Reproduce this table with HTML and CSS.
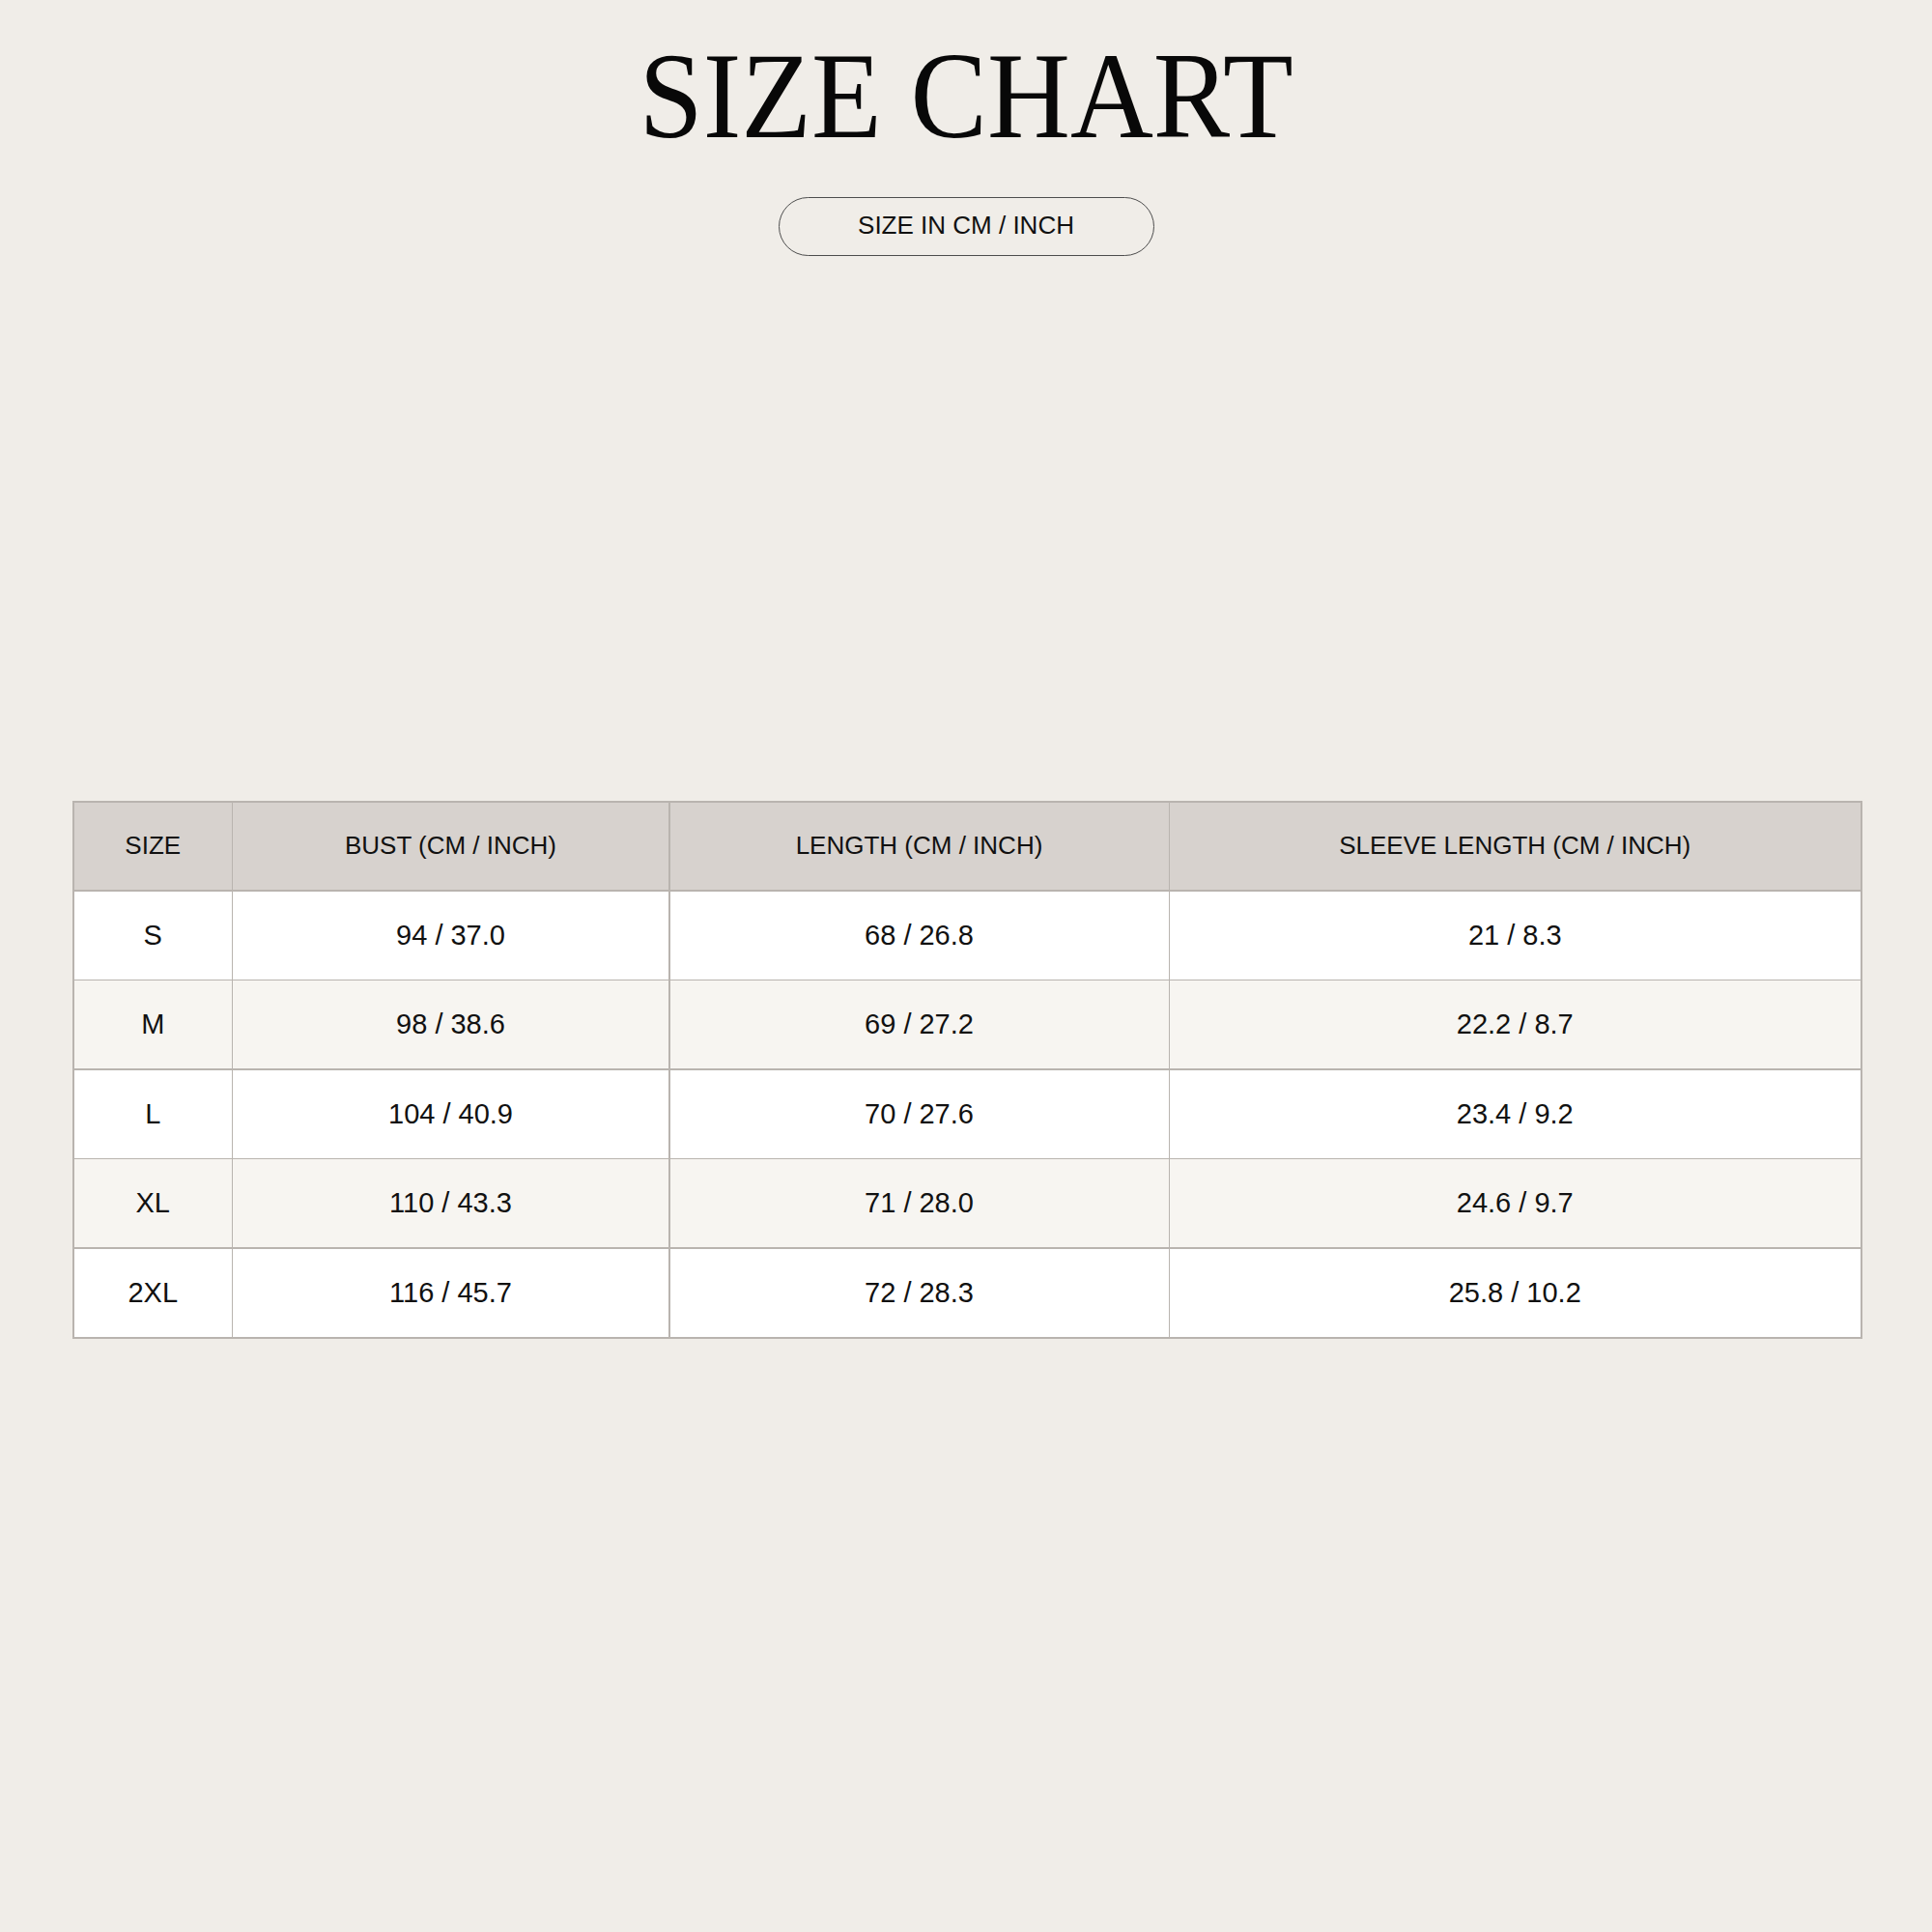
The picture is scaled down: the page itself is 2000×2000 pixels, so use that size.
FILE: index.html
```html
<!DOCTYPE html>
<html lang="en">
<head>
<meta charset="utf-8">
<title>Size Chart</title>
<link rel="stylesheet" href="styles.css">
</head>
<body>
<main class="page">
  <header class="head">
    <h1 class="title"><span class="title-text">SIZE CHART</span></h1>
    <div class="pill">SIZE IN CM / INCH</div>
  </header>

  <section class="chart">
    <div class="cell hd">SIZE</div>
    <div class="cell hd">BUST (CM / INCH)</div>
    <div class="cell hd">LENGTH (CM / INCH)</div>
    <div class="cell hd">SLEEVE LENGTH (CM / INCH)</div>

    <div class="cell">S</div>
    <div class="cell">94 / 37.0</div>
    <div class="cell">68 / 26.8</div>
    <div class="cell">21 / 8.3</div>

    <div class="cell alt">M</div>
    <div class="cell alt">98 / 38.6</div>
    <div class="cell alt">69 / 27.2</div>
    <div class="cell alt">22.2 / 8.7</div>

    <div class="cell">L</div>
    <div class="cell">104 / 40.9</div>
    <div class="cell">70 / 27.6</div>
    <div class="cell">23.4 / 9.2</div>

    <div class="cell alt">XL</div>
    <div class="cell alt">110 / 43.3</div>
    <div class="cell alt">71 / 28.0</div>
    <div class="cell alt">24.6 / 9.7</div>

    <div class="cell">2XL</div>
    <div class="cell">116 / 45.7</div>
    <div class="cell">72 / 28.3</div>
    <div class="cell">25.8 / 10.2</div>
  </section>
</main>
</body>
</html>
```

FILE: styles.css
```css
html, body {
  margin: 0;
  padding: 0;
}

body {
  background: #f0ede8;
  color: #111111;
  font-family: "Liberation Sans", Arial, sans-serif;
  width: 2000px;
  min-height: 2000px;
}

.page {
  display: flex;
  flex-direction: column;
}

.head {
  display: flex;
  flex-direction: column;
  align-items: center;
}

.title {
  margin: 35px 0 0;
  font-family: "Liberation Serif", "Times New Roman", serif;
  font-weight: 400;
  font-size: 128px;
  line-height: 128px;
  color: #080808;
  white-space: nowrap;
}

.title-text {
  display: inline-block;
  transform: scaleX(0.93);
  transform-origin: center;
}

.pill {
  margin-top: 41px;
  box-sizing: border-box;
  width: 389px;
  height: 61px;
  border: 1px solid #4d4d4d;
  border-radius: 31px;
  display: flex;
  align-items: center;
  justify-content: center;
  padding-bottom: 2px;
  font-size: 26px;
  color: #111111;
}

.chart {
  margin: 564px 0 0 75px;
  width: 1853px;
  box-sizing: border-box;
  display: grid;
  grid-template-columns: 162.5px 451px 516px 714.5px;
  grid-template-rows: 90px repeat(5, 91px);
  gap: 1.5px;
  padding: 2px;
  background: #b9b4af;
}

.cell {
  background: #ffffff;
  display: flex;
  align-items: center;
  justify-content: center;
  font-size: 29px;
  color: #111111;
  white-space: nowrap;
}

.cell.hd {
  background: #d7d2ce;
  font-size: 26px;
  padding-bottom: 2px;
}

.cell.alt {
  background: #f7f5f1;
}
```
